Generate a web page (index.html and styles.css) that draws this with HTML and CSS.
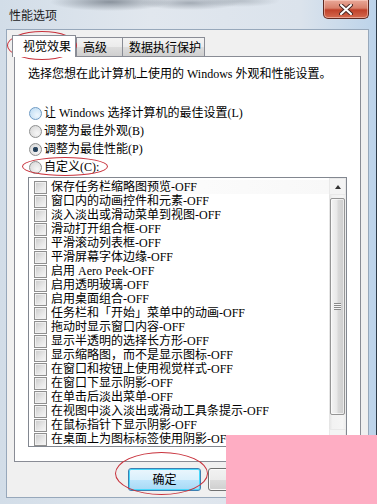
FILE: index.html
```html
<!DOCTYPE html>
<html lang="zh-CN">
<head>
  <meta charset="UTF-8">
  <title>性能选项</title>
  <link rel="stylesheet" href="styles.css">
</head>
<body>

<div class="window">
  <div class="titlebar">
    <span class="title">性能选项</span>
    <button class="close">
      <svg width="14" height="11" viewBox="0 0 14 11">
        <path d="M2 1 L12 10 M12 1 L2 10" stroke="#4a2a26" stroke-width="4" stroke-linecap="round"/>
        <path d="M2 1 L12 10 M12 1 L2 10" stroke="#fff" stroke-width="2" stroke-linecap="round"/>
      </svg>
    </button>
  </div>

  <div class="dialog">
    <ul class="tabs">
      <li class="tab active">视觉效果</li>
      <li class="tab">高级</li>
      <li class="tab">数据执行保护</li>
    </ul>

    <div class="panel">
      <p class="intro">选择您想在此计算机上使用的 Windows 外观和性能设置。</p>

      <ul class="options">
        <li><span class="radio hover"></span>让 Windows 选择计算机的最佳设置(L)</li>
        <li><span class="radio"></span>调整为最佳外观(B)</li>
        <li><span class="radio checked"></span>调整为最佳性能(P)</li>
        <li><span class="radio"></span>自定义(C):</li>
      </ul>

      <div class="listbox">
        <ul class="checks">
          <li class="first"><span class="box"></span>保存任务栏缩略图预览-OFF</li>
          <li><span class="box"></span>窗口内的动画控件和元素-OFF</li>
          <li><span class="box"></span>淡入淡出或滑动菜单到视图-OFF</li>
          <li><span class="box"></span>滑动打开组合框-OFF</li>
          <li><span class="box"></span>平滑滚动列表框-OFF</li>
          <li><span class="box"></span>平滑屏幕字体边缘-OFF</li>
          <li><span class="box"></span>启用 Aero Peek-OFF</li>
          <li><span class="box"></span>启用透明玻璃-OFF</li>
          <li><span class="box"></span>启用桌面组合-OFF</li>
          <li><span class="box"></span>任务栏和「开始」菜单中的动画-OFF</li>
          <li><span class="box"></span>拖动时显示窗口内容-OFF</li>
          <li><span class="box"></span>显示半透明的选择长方形-OFF</li>
          <li><span class="box"></span>显示缩略图，而不是显示图标-OFF</li>
          <li><span class="box"></span>在窗口和按钮上使用视觉样式-OFF</li>
          <li><span class="box"></span>在窗口下显示阴影-OFF</li>
          <li><span class="box"></span>在单击后淡出菜单-OFF</li>
          <li><span class="box"></span>在视图中淡入淡出或滑动工具条提示-OFF</li>
          <li><span class="box"></span>在鼠标指针下显示阴影-OFF</li>
          <li><span class="box"></span>在桌面上为图标标签使用阴影-OFF</li>
        </ul>
        <div class="scrollbar">
          <div class="arrow up"></div>
          <div class="track">
            <div class="thumb"><span class="grip"></span></div>
          </div>
          <div class="arrow down"></div>
        </div>
      </div>
    </div>

    <div class="buttons">
      <button class="btn default">确定</button>
      <button class="btn">取消</button>
      <button class="btn">应用(A)</button>
    </div>
  </div>

  <div class="mark mark-tab"></div>
  <div class="mark mark-custom"></div>
  <div class="mark mark-ok"></div>
  <div class="cover"></div>
</div>

</body>
</html>
```

FILE: styles.css
```css
* {
  box-sizing: border-box;
}

body,
html {
  margin: 0;
  height: 100%;
  overflow: hidden;
}

body {
  font: 12px/14px "Liberation Serif", "Noto Sans CJK SC", serif;
  color: #000;
  background: #d6e0ea;
}

ul {
  margin: 0;
  padding: 0;
  list-style: none;
}

.window {
  position: relative;
  width: 377px;
  height: 504px;
  display: flex;
  flex-direction: column;
  border-right: 1px solid #2c3a48;
  background:
    radial-gradient(ellipse 60px 9px at 110px 2px, rgba(70, 80, 92, 0.55), transparent),
    radial-gradient(ellipse 50px 7px at 190px 3px, rgba(90, 100, 112, 0.45), transparent),
    radial-gradient(ellipse 40px 6px at 240px 1px, rgba(110, 120, 130, 0.35), transparent),
    linear-gradient(to right, #d2dde8 0%, #e1e7ee 40%, #dbe3ec 80%, #bcd3ea 100%);
}

.titlebar {
  height: 29px;
  display: flex;
  align-items: flex-start;
  padding-left: 9px;
}

.title {
  margin-top: 9px;
  color: #1b1b1b;
}

.close {
  margin: 0 7px 0 auto;
  width: 46px;
  height: 19px;
  padding: 0;
  display: flex;
  align-items: center;
  justify-content: center;
  border: 1px solid #5f2a22;
  border-top: 0;
  border-radius: 0 0 5px 5px;
  background: linear-gradient(#e9a898 0%, #d8806b 45%, #c0412a 55%, #d46a4f 100%);
  box-shadow: inset 0 0 0 1px rgba(255, 220, 210, 0.5);
}

.dialog {
  flex: 1;
  margin: 0 7px 6px 6px;
  display: flex;
  flex-direction: column;
  background: #f0f0f0;
  border: 1px solid #97a8bb;
}

.tabs {
  display: flex;
  align-items: flex-end;
  height: 26px;
  padding-left: 5px;
}

.tab {
  height: 19px;
  padding: 3px 0 0 6px;
  border: 1px solid #898c95;
  border-bottom: 0;
  background: linear-gradient(#f3f3f3, #ebebeb 50%, #dddddd 50%, #cfcfcf);
}

.tab:nth-child(2) {
  width: 47px;
}

.tab:nth-child(3) {
  width: 83px;
  margin-left: -1px;
}

.tab.active {
  position: relative;
  z-index: 1;
  width: 64px;
  height: 22px;
  margin-bottom: -1px;
  padding: 4px 0 0 10px;
  background: #fff;
}

.panel {
  height: 406px;
  margin: 0 7px;
  padding: 10px 13px 0;
  background: #fff;
  border: 1px solid #898c95;
}

.intro {
  margin: 0;
}

.options {
  margin-top: 23px;
}

.options li {
  height: 18px;
  display: flex;
  align-items: center;
}

.radio {
  width: 13px;
  height: 13px;
  margin: 0 2px 0 1px;
  border: 1px solid #8e8f8f;
  border-radius: 50%;
  background: radial-gradient(circle at 65% 65%, #f6f6f6, #d4d4d4);
}

.radio.hover {
  border-color: #6f9bc4;
  background: radial-gradient(circle at 65% 65%, #eef7fd, #b9d9f2);
}

.radio.checked {
  background:
    radial-gradient(circle, #1f3347 0, #36536e 2.5px, transparent 3px),
    radial-gradient(circle at 65% 65%, #f6f6f6, #d4d4d4);
}

.listbox {
  height: 270px;
  margin-top: 1px;
  display: flex;
  overflow: hidden;
  border: 1px solid #828790;
}

.checks {
  flex: 1;
  padding: 2px 0 0 5px;
}

.checks li {
  height: 14px;
  display: flex;
  align-items: center;
  white-space: nowrap;
}

.checks li.first {
  background: linear-gradient(to right, #fff, #f8f8f8);
}

.box {
  flex: none;
  width: 13px;
  height: 13px;
  margin-right: 4px;
  border: 1px solid #8f8f8f;
  background: linear-gradient(135deg, #cacaca, #e8e8e8 60%, #f7f7f7);
  box-shadow: inset 0 0 0 1px #f0f0f0;
}

.scrollbar {
  width: 17px;
  display: flex;
  flex-direction: column;
  background: linear-gradient(to right, #e3e3e3, #f2f2f2 20%, #f5f5f5 80%, #ececec);
}

.arrow {
  height: 17px;
  display: flex;
  align-items: center;
  justify-content: center;
  border: 1px solid #e9e9e9;
  background: #f4f4f4;
}

.arrow:before {
  content: '';
  border-left: 3px solid transparent;
  border-right: 3px solid transparent;
}

.arrow.up:before {
  border-bottom: 4px solid #333;
}

.arrow.down:before {
  border-top: 4px solid #333;
}

.track {
  flex: 1;
  padding-top: 3px;
}

.thumb {
  height: 217px;
  margin: 0 1px;
  display: flex;
  align-items: center;
  justify-content: center;
  border: 1px solid #959595;
  border-radius: 2px;
  background: linear-gradient(to right, #f4f4f4, #e8e8e8 45%, #d9d9d9 55%, #cdcdcd);
  box-shadow: inset 0 0 0 1px rgba(255, 255, 255, 0.6);
}

.grip {
  width: 7px;
  height: 7px;
  background: repeating-linear-gradient(#8a8a8a 0, #8a8a8a 1px, #f6f6f6 1px, #f6f6f6 2px);
}

.buttons {
  display: flex;
  justify-content: flex-end;
  gap: 7px;
  margin-top: 6px;
  padding-right: 7px;
}

.btn {
  width: 73px;
  height: 23px;
  padding: 0;
  font: inherit;
  color: #000;
  border: 1px solid #707070;
  border-radius: 3px;
  background: linear-gradient(#f2f2f2, #ebebeb 50%, #dddddd 50%, #cfcfcf);
  box-shadow: inset 0 0 0 1px #fbfbfb;
}

.btn.default {
  border-color: #3c7fb1;
  background: linear-gradient(#eaf6fd, #d9f0fc 50%, #bee6fd 50%, #a7d9f5);
  box-shadow: inset 0 0 0 1px #48d8fb;
}

.mark {
  position: absolute;
  border: 1.3px solid #c8323c;
  border-radius: 50%;
}

.mark-tab {
  left: 7px;
  top: 31px;
  width: 70px;
  height: 29px;
}

.mark-custom {
  left: 22px;
  top: 157px;
  width: 86px;
  height: 19px;
}

.mark-ok {
  left: 115px;
  top: 452px;
  width: 93px;
  height: 43px;
}

.cover {
  position: absolute;
  left: 226px;
  top: 435px;
  width: 151px;
  height: 69px;
  background: #feadc3;
}
```
